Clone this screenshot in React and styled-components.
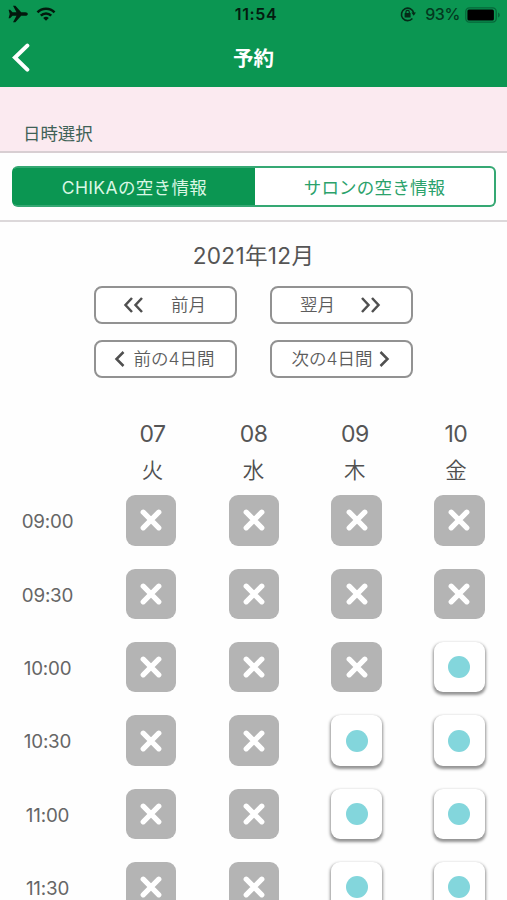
import React from "react";
import styled, { createGlobalStyle } from "styled-components";

const GlobalStyle = createGlobalStyle`
  * { box-sizing: border-box; }
  body {
    margin: 0;
    background: #fff;
    overflow: hidden;
    font-family: Inter, "Noto Sans CJK JP", sans-serif;
    color: #555;
  }
`;

const GREEN = "#0b9652";

const Screen = styled.div`
  width: 507px;
  height: 900px;
  overflow: hidden;
  background: #fefefe;
`;

const Header = styled.header`
  height: 87px;
  background: ${GREEN};
`;

const StatusBar = styled.div`
  display: grid;
  grid-template-columns: 1fr auto 1fr;
  align-items: center;
  height: 29px;
  padding: 0 6px 0 8px;
  color: #041c10;
`;

const StatusGroup = styled.div`
  display: flex;
  align-items: center;
  height: 29px;
  justify-content: ${(p) => (p.$end ? "flex-end" : "flex-start")};
`;

const AirplaneIcon = styled.svg`
  width: 20px;
  height: 18px;
  margin-bottom: 1px;
`;

const WifiIcon = styled.svg`
  width: 20px;
  height: 14px;
  margin-left: 8px;
  margin-bottom: 1px;
`;

const LockIcon = styled.svg`
  width: 16px;
  height: 16px;
  margin: 0 9px 1px 0;
`;

const Clock = styled.span`
  font-size: 16px;
  font-weight: 600;
  letter-spacing: 0.6px;
  line-height: 29px;
  margin-left: 3px;
`;

const Battery = styled.span`
  font-size: 16px;
  font-weight: 500;
  letter-spacing: -0.4px;
  line-height: 29px;
  color: #04391f;
`;

const BatteryIcon = styled.svg`
  width: 36px;
  height: 16px;
  margin-left: 5px;
`;

const NavBar = styled.div`
  display: grid;
  grid-template-columns: 40px 1fr 40px;
  align-items: center;
  height: 58px;
`;

const BackIcon = styled.svg`
  width: 20px;
  height: 30px;
  margin-left: 11px;
`;

const Title = styled.h1`
  margin: 2px 0 0;
  color: #fff;
  font-size: 20.5px;
  font-weight: 700;
  line-height: 30px;
  text-align: center;
`;

const SectionBand = styled.div`
  display: flex;
  align-items: flex-end;
  height: 66px;
  padding: 0 23px 4px;
  background: #fbeaf0;
  border-bottom: 2px solid #d8ced2;
  color: #3f6257;
  font-size: 17.4px;
  line-height: 26px;
`;

const TabBar = styled.div`
  height: 69px;
  padding: 13px 11px 0 12px;
  border-bottom: 2px solid #dcd8da;
`;

const Segments = styled.div`
  display: grid;
  grid-template-columns: 241px 1fr;
  height: 41px;
  border: 2px solid #35a873;
  border-left-color: ${GREEN};
  border-radius: 6px;
  background: ${GREEN};
  overflow: hidden;
`;

const Segment = styled.button`
  border: 0;
  padding: 2px 0 0;
  font: inherit;
  font-size: 17.5px;
  line-height: 35px;
  text-align: center;
  letter-spacing: ${(p) => (p.$active ? "0.35px" : "0.2px")};
  background: ${(p) => (p.$active ? GREEN : "#fff")};
  color: ${(p) => (p.$active ? "#d9f7e4" : "#2ba26b")};
`;

const Month = styled.h2`
  margin: 18px 0 0;
  font-size: 22.6px;
  font-weight: 400;
  letter-spacing: 0.3px;
  line-height: 32px;
  text-align: center;
  color: #555;
`;

const PagerGrid = styled.div`
  display: grid;
  grid-template-columns: 143px 143px;
  grid-auto-rows: 38px;
  gap: 16px 33px;
  width: 319px;
  margin: 14px 0 0 94px;
`;

const PagerButton = styled.button`
  display: flex;
  align-items: center;
  justify-content: center;
  gap: ${(p) => p.$gap}px;
  padding: 0 2px 0 0;
  border: 2.5px solid #929292;
  border-radius: 8px;
  background: #fff;
  color: #5c5c5c;
  font: inherit;
  font-size: 17.5px;
  font-weight: 350;
  line-height: 32px;
`;

const PagerIcon = styled.svg`
  width: ${(p) => p.$w}px;
  height: 20px;
  flex: none;
`;

const DayHeader = styled.div`
  display: grid;
  grid-template-columns: repeat(4, 101.2px);
  margin: 38px 0 0 101.8px;
  text-align: center;
`;

const Day = styled.div`
  display: flex;
  flex-direction: column;
`;

const DayNumber = styled.span`
  font-size: 23px;
  line-height: 37px;
  letter-spacing: -0.6px;
`;

const Weekday = styled.span`
  font-size: 21.5px;
  line-height: 35px;
  font-weight: 350;
  color: #505050;
`;

const Slots = styled.div`
  display: grid;
  grid-auto-rows: 73.4px;
  margin-top: 7.2px;
`;

const SlotRow = styled.div`
  display: grid;
  grid-template-columns: 125.8px repeat(4, 102.8px);
  align-items: start;
`;

const Time = styled.span`
  width: 95px;
  font-size: 18.8px;
  line-height: 53px;
  text-align: center;
  letter-spacing: -0.2px;
  color: #666;
`;

const Slot = styled.button`
  display: flex;
  align-items: center;
  justify-content: center;
  width: 50.5px;
  height: 50.5px;
  padding: 0;
  border: 0;
  border-radius: 9px;
  background: ${(p) => (p.$open ? "#fff" : "#b4b4b4")};
  box-shadow: ${(p) => (p.$open ? "0 2px 3px 0.3px rgba(0,0,0,.42)" : "none")};
`;

const Dot = styled.span`
  width: 22px;
  height: 22px;
  border-radius: 50%;
  background: #83d6dc;
`;

const CrossIcon = styled.svg`
  width: 22px;
  height: 22px;
`;

const ARROWS = {
  prev: { w: 11, d: "M9.5 3 L2.5 10 L9.5 17" },
  next: { w: 11, d: "M1.5 3 L8.5 10 L1.5 17" },
  prevDouble: { w: 21, d: "M9 3 L2.5 10 L9 17 M19 3 L12.5 10 L19 17" },
  nextDouble: { w: 21, d: "M2 3 L8.5 10 L2 17 M12 3 L18.5 10 L12 17" },
};

function Arrow({ kind }) {
  const { w, d } = ARROWS[kind];
  return (
    <PagerIcon $w={w} viewBox={`0 0 ${w} 20`} fill="none">
      <path d={d} stroke="#505050" strokeWidth="2.5" />
    </PagerIcon>
  );
}

const days = [
  ["07", "火"],
  ["08", "水"],
  ["09", "木"],
  ["10", "金"],
];

const rows = [
  ["09:00", [0, 0, 0, 0]],
  ["09:30", [0, 0, 0, 0]],
  ["10:00", [0, 0, 0, 1]],
  ["10:30", [0, 0, 1, 1]],
  ["11:00", [0, 0, 1, 1]],
  ["11:30", [0, 0, 1, 1]],
];

export default function App() {
  return (
    <Screen>
      <GlobalStyle />
      <Header>
        <StatusBar>
          <StatusGroup>
            <AirplaneIcon viewBox="0 0 20 18">
              <path
                d="M0.6 4.8h1.5l2.4 2.5h4L5 0.8h2.4l5.8 6.4h4.2c1.4 0 2.4.8 2.4 1.8s-1 1.8-2.4 1.8h-4.2L7.4 17.2H5l3.5-6.5h-4l-2.4 2.5H0.6L1.7 9z"
                fill="#03190d"
              />
            </AirplaneIcon>
            <WifiIcon viewBox="0 0 20 14" fill="none" stroke="#03190d" strokeWidth="2.6">
              <path d="M1.5 5.3a12 12 0 0 1 17 0" />
              <path d="M4.8 8.7a7.4 7.4 0 0 1 10.4 0" />
              <path d="M7.2 11a4 4 0 0 1 5.6 0L10 13.8z" fill="#03190d" stroke="none" />
            </WifiIcon>
          </StatusGroup>
          <Clock>11:54</Clock>
          <StatusGroup $end>
            <LockIcon viewBox="0 0 16 16" fill="none" stroke="#052b18">
              <path d="M12.4 12.4A6.2 6.2 0 1 1 13.7 7" strokeWidth="1.6" />
              <path d="M11.4 6.4h4.6L13.7 9.8z" fill="#052b18" stroke="none" />
              <rect x="4.6" y="7" width="6" height="4.4" rx="0.5" fill="#052b18" stroke="none" />
              <path d="M5.9 7.2V6a1.7 1.7 0 0 1 3.4 0v1.2" strokeWidth="1.2" />
            </LockIcon>
            <Battery>93%</Battery>
            <BatteryIcon viewBox="0 0 36 16">
              <rect x="0.8" y="0.8" width="30.4" height="14.4" rx="3.6" fill="none" stroke="#07673a" strokeWidth="1.3" />
              <rect x="2.4" y="2.6" width="26.5" height="10.8" rx="1.5" fill="#000" />
              <path d="M33 5.5c2.4 1 2.4 4 0 5z" fill="#07673a" />
            </BatteryIcon>
          </StatusGroup>
        </StatusBar>
        <NavBar>
          <BackIcon viewBox="0 0 20 30" fill="none">
            <path d="M16.3 2.6 L4 14.6 L16.3 26.6" stroke="#fff" strokeWidth="4.1" strokeLinecap="round" />
          </BackIcon>
          <Title>予約</Title>
        </NavBar>
      </Header>
      <SectionBand>日時選択</SectionBand>
      <TabBar>
        <Segments>
          <Segment $active>CHIKAの空き情報</Segment>
          <Segment>サロンの空き情報</Segment>
        </Segments>
      </TabBar>
      <Month>2021年12月</Month>
      <PagerGrid>
        <PagerButton $gap={27}>
          <Arrow kind="prevDouble" />
          前月
        </PagerButton>
        <PagerButton $gap={25}>
          翌月
          <Arrow kind="nextDouble" />
        </PagerButton>
        <PagerButton $gap={8}>
          <Arrow kind="prev" />
          前の4日間
        </PagerButton>
        <PagerButton $gap={6}>
          次の4日間
          <Arrow kind="next" />
        </PagerButton>
      </PagerGrid>
      <DayHeader>
        {days.map(([number, weekday]) => (
          <Day key={number}>
            <DayNumber>{number}</DayNumber>
            <Weekday>{weekday}</Weekday>
          </Day>
        ))}
      </DayHeader>
      <Slots>
        {rows.map(([time, slots]) => (
          <SlotRow key={time}>
            <Time>{time}</Time>
            {slots.map((open, i) => (
              <Slot key={i} $open={open === 1}>
                {open ? (
                  <Dot />
                ) : (
                  <CrossIcon viewBox="0 0 22 22" fill="none">
                    <path d="M3.2 3.2 L18.8 18.8 M18.8 3.2 L3.2 18.8" stroke="#fff" strokeWidth="5.2" strokeLinecap="round" />
                  </CrossIcon>
                )}
              </Slot>
            ))}
          </SlotRow>
        ))}
      </Slots>
    </Screen>
  );
}
